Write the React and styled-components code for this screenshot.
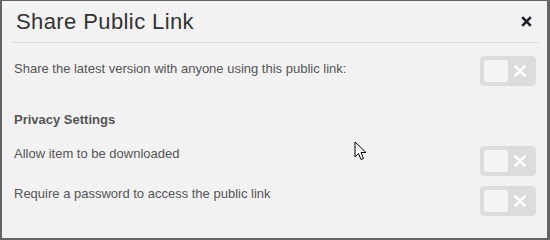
import React from 'react';
import styled, { createGlobalStyle } from 'styled-components';

const GlobalStyle = createGlobalStyle`
  html, body {
    margin: 0;
    padding: 0;
    background: #646464;
  }
  body {
    font-family: "Liberation Sans", Arial, sans-serif;
  }
`;

const Dialog = styled.div`
  position: relative;
  box-sizing: border-box;
  margin: 1px 3px 0 2px;
  width: 545px;
  height: 237px;
  background: #f2f2f2;
  padding: 0 9px 0 10px;
`;

const Header = styled.div`
  display: flex;
  align-items: center;
  justify-content: space-between;
  height: 41px;
  border-bottom: 1px solid #dcdcdc;
`;

const Title = styled.h1`
  margin: 0;
  padding-left: 4px;
  font-weight: 400;
  font-size: 22px;
  letter-spacing: 0.4px;
  color: #333;
`;

const Close = styled.button`
  display: flex;
  align-items: center;
  justify-content: center;
  border: 0;
  padding: 0;
  margin-right: 6px;
  background: transparent;
  width: 11px;
  height: 14px;
  svg {
    display: block;
  }
`;

const Body = styled.div`
  padding: 0 2px;
`;

const Row = styled.div`
  display: flex;
  justify-content: space-between;
  align-items: flex-start;
  margin-top: ${({ gap }) => gap}px;
`;

const Label = styled.span`
  font-size: 13px;
  color: #555;
  line-height: 15px;
  padding-top: ${({ shift }) => shift}px;
`;

const Section = styled.h2`
  margin: 0;
  margin-top: 26px;
  font-size: 13px;
  font-weight: 700;
  color: #555;
  line-height: 15px;
`;

const Toggle = styled.div`
  display: flex;
  align-items: center;
  box-sizing: border-box;
  width: 56px;
  height: 30px;
  padding: 4px;
  border-radius: 4px;
  background: #dcdcdc;
`;

const Knob = styled.div`
  width: 24px;
  height: 22px;
  border-radius: 3px;
  background: #f5f5f5;
`;

const Mark = styled.div`
  flex: 1;
  display: flex;
  justify-content: center;
  svg {
    display: block;
  }
`;

const Cursor = styled.svg`
  position: absolute;
  left: 352px;
  top: 140px;
`;

const Switch = () => (
  <Toggle>
    <Knob />
    <Mark>
      <svg width="12" height="12" viewBox="0 0 12 12">
        <path d="M1.5 1.5L10.5 10.5M10.5 1.5L1.5 10.5" stroke="#fff" strokeWidth="2.4" strokeLinecap="square" />
      </svg>
    </Mark>
  </Toggle>
);

const App = () => (
  <>
    <GlobalStyle />
    <Dialog>
      <Header>
        <Title>Share Public Link</Title>
        <Close aria-label="close">
          <svg width="11" height="11" viewBox="0 0 11 11">
            <path d="M1.2 1.2L9.8 9.8M9.8 1.2L1.2 9.8" stroke="#1e1e2a" strokeWidth="2.6" />
          </svg>
        </Close>
      </Header>
      <Body>
        <Row gap={13}>
          <Label shift={5}>Share the latest version with anyone using this public link:</Label>
          <Switch />
        </Row>
        <Section>Privacy Settings</Section>
        <Row gap={19}>
          <Label shift={0}>Allow item to be downloaded</Label>
          <Switch />
        </Row>
        <Row gap={10}>
          <Label shift={0}>Require a password to access the public link</Label>
          <Switch />
        </Row>
      </Body>
      <Cursor width="14" height="20" viewBox="0 0 14 20">
        <path d="M1 1V16L4.5 12.5L7 18.5L9.5 17.5L7 11.5H12Z" fill="#fff" stroke="#000" strokeWidth="1" strokeLinejoin="round" />
      </Cursor>
    </Dialog>
  </>
);

export default App;
